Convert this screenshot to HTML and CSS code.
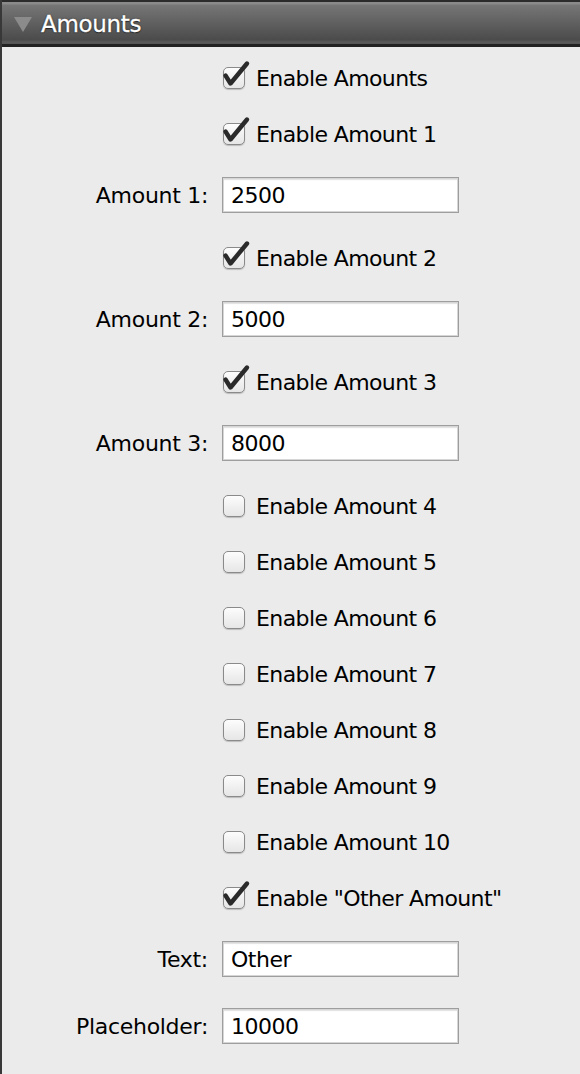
FILE: index.html
```html
<!DOCTYPE html>
<html>
<head>
<meta charset="utf-8">
<link rel="stylesheet" href="styles.css">
</head>
<body>
<div class="panel">
  <div class="header">
    <svg class="disclosure" width="20" height="18" viewBox="0 0 20 18"><polygon points="1,2 19,2 10,17" fill="#8b8b8b"/></svg>
    <span class="title">Amounts</span>
  </div>
  <div class="content">
    <div class="row check-row"><span></span><label class="cb"><span class="box on"><svg class="tick" width="30" height="30" viewBox="0 0 30 30"><path d="M3.5 15.5 L8.5 23.5 L25 3.5" /></svg></span>Enable Amounts</label></div>
    <div class="row check-row"><span></span><label class="cb"><span class="box on"><svg class="tick" width="30" height="30" viewBox="0 0 30 30"><path d="M3.5 15.5 L8.5 23.5 L25 3.5" /></svg></span>Enable Amount 1</label></div>
    <div class="row input-row"><span class="lbl">Amount 1:</span><div class="field">2500</div></div>
    <div class="row check-row"><span></span><label class="cb"><span class="box on"><svg class="tick" width="30" height="30" viewBox="0 0 30 30"><path d="M3.5 15.5 L8.5 23.5 L25 3.5" /></svg></span>Enable Amount 2</label></div>
    <div class="row input-row"><span class="lbl">Amount 2:</span><div class="field">5000</div></div>
    <div class="row check-row"><span></span><label class="cb"><span class="box on"><svg class="tick" width="30" height="30" viewBox="0 0 30 30"><path d="M3.5 15.5 L8.5 23.5 L25 3.5" /></svg></span>Enable Amount 3</label></div>
    <div class="row input-row"><span class="lbl">Amount 3:</span><div class="field">8000</div></div>
    <div class="row check-row"><span></span><label class="cb"><span class="box"></span>Enable Amount 4</label></div>
    <div class="row check-row"><span></span><label class="cb"><span class="box"></span>Enable Amount 5</label></div>
    <div class="row check-row"><span></span><label class="cb"><span class="box"></span>Enable Amount 6</label></div>
    <div class="row check-row"><span></span><label class="cb"><span class="box"></span>Enable Amount 7</label></div>
    <div class="row check-row"><span></span><label class="cb"><span class="box"></span>Enable Amount 8</label></div>
    <div class="row check-row"><span></span><label class="cb"><span class="box"></span>Enable Amount 9</label></div>
    <div class="row check-row"><span></span><label class="cb"><span class="box"></span>Enable Amount 10</label></div>
    <div class="row check-row"><span></span><label class="cb"><span class="box on"><svg class="tick" width="30" height="30" viewBox="0 0 30 30"><path d="M3.5 15.5 L8.5 23.5 L25 3.5" /></svg></span>Enable "Other Amount"</label></div>
    <div class="row input-row"><span class="lbl">Text:</span><div class="field">Other</div></div>
    <div class="row input-row last"><span class="lbl">Placeholder:</span><div class="field">10000</div></div>
  </div>
</div>
</body>
</html>
```
FILE: styles.css
```css
html, body {
  margin: 0;
  padding: 0;
  background: #ebebeb;
}
body {
  font-family: "DejaVu Sans", "Verdana", sans-serif;
  font-size: 22px;
  letter-spacing: -0.5px;
  color: #000;
}
.panel {
  width: 580px;
  height: 1074px;
  overflow: hidden;
  background: #ebebeb;
  border-left: 2px solid #383838;
  box-sizing: border-box;
}
.header {
  height: 47px;
  box-sizing: border-box;
  border-top: 2px solid #2b2b2b;
  border-bottom: 3px solid #222;
  background: linear-gradient(#8a8a8a 0, #8a8a8a 2px, #767676 3px, #4b4b4b 38px, #5a5a5a 40px, #555 42px);
  display: flex;
  align-items: center;
  padding-left: 11px;
  gap: 8px;
}
.disclosure {
  display: block;
  margin-top: 2px;
}
.title {
  color: #fff;
  font-size: 23px;
  letter-spacing: -0.3px;
  text-shadow: 0 0 2px rgba(0,0,0,0.7), 0 1px 1px rgba(0,0,0,0.5);
  -webkit-text-stroke: 0.3px #fff;
  margin-top: 1px;
}
.content {
  padding-top: 3px;
}
.row {
  display: grid;
  grid-template-columns: 206px 1fr;
  column-gap: 14px;
  align-items: center;
}
.check-row {
  height: 56px;
}
.input-row {
  padding: 15px 0 17px;
}
.input-row.last {
  padding-top: 14px;
}
.lbl {
  text-align: right;
  white-space: nowrap;
  letter-spacing: -0.3px;
}
.cb {
  display: flex;
  align-items: center;
  gap: 11px;
  white-space: nowrap;
  padding-left: 1px;
  letter-spacing: -0.6px;
}
.box {
  position: relative;
  width: 22px;
  height: 22px;
  box-sizing: border-box;
  border: 1px solid #8a8a8a;
  border-radius: 5px;
  background: linear-gradient(#fdfdfd, #f1f1f1 50%, #e6e6e6);
  box-shadow: 0 1px 1px rgba(0,0,0,0.2);
  flex: none;
}
.tick {
  position: absolute;
  left: -2px;
  top: -8px;
  overflow: visible;
}
.tick path {
  fill: none;
  stroke: #2a2a2a;
  stroke-width: 4.4px;
  stroke-linecap: round;
  stroke-linejoin: round;
}
.field {
  width: 237px;
  height: 36px;
  box-sizing: border-box;
  border: 1px solid #9e9e9e;
  background: #fff;
  box-shadow: inset 0 0 0 1px #d6d6d6, inset 0 2px 1px rgba(0,0,0,0.12);
  padding-left: 8px;
  display: flex;
  align-items: center;
  line-height: 1;
  padding-top: 1px;
}
```
